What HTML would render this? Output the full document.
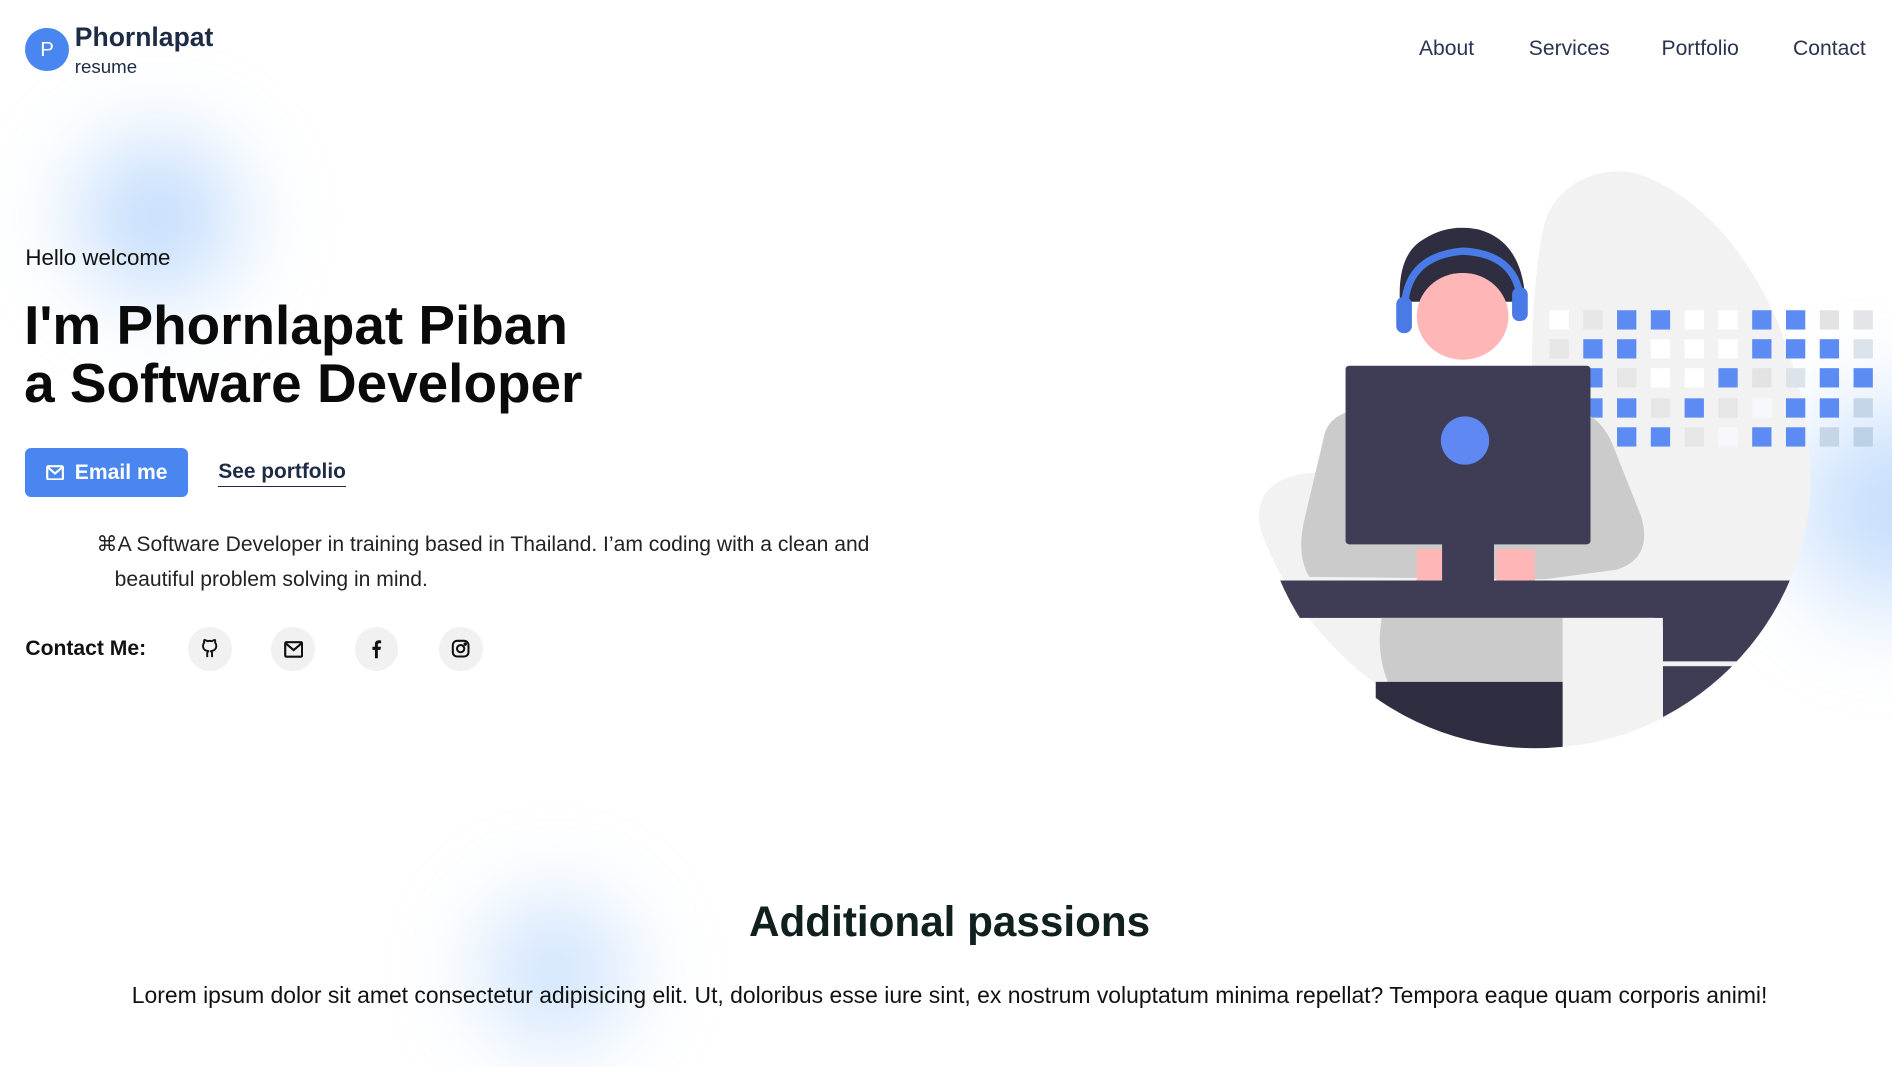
<!DOCTYPE html>
<html><head><meta charset="utf-8">
<style>
html,body{margin:0;padding:0;background:#fff;overflow:hidden}
body{width:1892px;height:1067px}
#pg{zoom:1.2066;position:relative;width:1568px;height:884px;overflow:hidden;font-family:"Liberation Sans",sans-serif;color:#111}
.blob{position:absolute;border-radius:50%;filter:blur(30px)}
.abs{position:absolute;white-space:nowrap}
.nav a{position:absolute;top:31px;font-size:17.5px;color:#2b3350;text-decoration:none}
.ic{position:absolute;top:520px;width:36px;height:36px;border-radius:50%;background:#f1f1f1;display:flex;align-items:center;justify-content:center}
</style></head><body><div id="pg">
<div class="blob" style="left:20px;top:90px;width:220px;height:180px;background:radial-gradient(circle,rgba(150,195,250,.75),rgba(190,220,255,0) 70%)"></div>
<div class="blob" style="left:1440px;top:290px;width:260px;height:260px;background:radial-gradient(circle,rgba(150,195,250,.7),rgba(190,220,255,0) 70%)"></div>
<div class="blob" style="left:360px;top:720px;width:200px;height:170px;background:radial-gradient(circle,rgba(150,195,250,.6),rgba(190,220,255,0) 70%)"></div>

<div class="abs" style="left:21px;top:23px;width:36px;height:36px;border-radius:50%;background:#4a86f0;color:#fff;font-size:17px;text-align:center;line-height:36px">P</div>
<div class="abs" style="left:62px;top:18px;font-size:22px;font-weight:bold;color:#1d2b45">Phornlapat</div>
<div class="abs" style="left:62px;top:46px;font-size:15.5px;color:#1d2b45">resume</div>
<div class="nav"><a style="left:1176px">About</a><a style="left:1267px">Services</a><a style="left:1377px">Portfolio</a><a style="left:1486px">Contact</a></div>

<div class="abs" style="left:21px;top:203px;font-size:18.5px;color:#111">Hello welcome</div>
<div class="abs" style="left:20px;top:246px;font-size:45.5px;font-weight:bold;line-height:48px;color:#0a0a0a">I'm Phornlapat Piban<br>a Software Developer</div>
<div class="abs" style="left:21px;top:371px;width:135px;height:41px;border-radius:5px;background:#4a86f0;color:#fff;font-size:17.5px;line-height:41px">
<svg style="position:absolute;left:17px;top:14px" width="15" height="13" viewBox="0 0 15 13"><rect x="1" y="1" width="13" height="11" rx="1" fill="none" stroke="#fff" stroke-width="1.8"/><path d="M1.5 2 L7.5 7 L13.5 2" fill="none" stroke="#fff" stroke-width="1.8"/></svg>
<span style="position:absolute;left:41px;font-weight:bold">Email me</span></div>
<div class="abs" style="left:181px;top:381px;font-size:17.3px;font-weight:bold;color:#1d2b45;border-bottom:1px solid #1d2b45;padding-bottom:2px">See portfolio</div>
<div class="abs" style="left:80px;top:438px;font-size:17.5px;color:#222;line-height:29px">⌘A Software Developer in training based in Thailand. I’am coding with a clean and<br><span style="padding-left:15px">beautiful problem solving in mind.</span></div>
<div class="abs" style="left:21px;top:528px;font-size:17.5px;font-weight:bold;color:#111">Contact Me:</div>
<div class="ic" style="left:156px"><svg width="16" height="16" viewBox="0 0 16 16" fill="none" stroke="#111" stroke-width="1.6" stroke-linejoin="round"><path d="M6 15v-3c0-1 .3-1.5 1-2-2.5-.3-4.5-1.2-4.5-4.5 0-1 .3-1.7 1-2.4-.2-.6-.2-1.5.1-2.3 1 0 1.8.5 2.5 1a7 7 0 0 1 3.8 0c.7-.5 1.5-1 2.5-1 .3.8.3 1.7.1 2.3.7.7 1 1.4 1 2.4 0 3.3-2 4.2-4.5 4.5.7.5 1 1.2 1 2v3"/></svg></div>
<div class="ic" style="left:225px"><svg width="16" height="14" viewBox="0 0 16 14"><rect x="1" y="1" width="14" height="12" rx="1" fill="none" stroke="#111" stroke-width="1.8"/><path d="M1.5 2 L8 7.5 L14.5 2" fill="none" stroke="#111" stroke-width="1.8"/></svg></div>
<div class="ic" style="left:294px"><svg width="10" height="16" viewBox="0 0 10 16"><path d="M6.5 16V9h2.2l.4-2.6H6.5V4.8c0-.8.3-1.3 1.4-1.3h1.3V1.2C8.9 1.1 8.1 1 7.3 1 5.4 1 4.1 2.2 4.1 4.3v2.1H2V9h2.1v7z" fill="#111"/></svg></div>
<div class="ic" style="left:364px"><svg width="16" height="16" viewBox="0 0 16 16" fill="none" stroke="#111" stroke-width="1.7"><rect x="1.5" y="1.5" width="13" height="13" rx="3.5"/><circle cx="8" cy="8" r="3"/><circle cx="11.8" cy="4.2" r=".6" fill="#111"/></svg></div>

<svg class="abs" style="left:1030px;top:130px" width="540" height="500" viewBox="1030 130 540 500">
<defs><clipPath id="c"><circle cx="1272" cy="390" r="230"/></clipPath></defs>
<path d="M1280 185 C1290 150 1330 135 1360 145 C1430 170 1490 260 1500 380 C1508 500 1420 600 1310 617 C1190 630 1080 540 1045 440 C1035 400 1070 390 1100 392 L1270 330 C1268 280 1272 215 1280 185 Z" fill="#f2f2f2"/>
<g>
<rect x="1284" y="257" width="16" height="16" fill="#fff"/><rect x="1312" y="257" width="16" height="16" fill="#e6e6e6"/><rect x="1340" y="257" width="16" height="16" fill="#5d8bf4"/><rect x="1368" y="257" width="16" height="16" fill="#5d8bf4"/><rect x="1396" y="257" width="16" height="16" fill="#fff"/><rect x="1424" y="257" width="16" height="16" fill="#fff"/><rect x="1452" y="257" width="16" height="16" fill="#5d8bf4"/><rect x="1480" y="257" width="16" height="16" fill="#5d8bf4"/><rect x="1508" y="257" width="16" height="16" fill="#e3e3e3"/><rect x="1536" y="257" width="16" height="16" fill="#e3e5e8"/>
<rect x="1284" y="281" width="16" height="16" fill="#e6e6e6"/><rect x="1312" y="281" width="16" height="16" fill="#5d8bf4"/><rect x="1340" y="281" width="16" height="16" fill="#5d8bf4"/><rect x="1368" y="281" width="16" height="16" fill="#fff"/><rect x="1396" y="281" width="16" height="16" fill="#fff"/><rect x="1424" y="281" width="16" height="16" fill="#fff"/><rect x="1452" y="281" width="16" height="16" fill="#5d8bf4"/><rect x="1480" y="281" width="16" height="16" fill="#5d8bf4"/><rect x="1508" y="281" width="16" height="16" fill="#5d8bf4"/><rect x="1536" y="281" width="16" height="16" fill="#dde3ea"/>
<rect x="1312" y="305" width="16" height="16" fill="#5d8bf4"/><rect x="1340" y="305" width="16" height="16" fill="#e6e6e6"/><rect x="1368" y="305" width="16" height="16" fill="#fff"/><rect x="1396" y="305" width="16" height="16" fill="#fff"/><rect x="1424" y="305" width="16" height="16" fill="#5d8bf4"/><rect x="1452" y="305" width="16" height="16" fill="#e3e3e3"/><rect x="1480" y="305" width="16" height="16" fill="#dde3ea"/><rect x="1508" y="305" width="16" height="16" fill="#5d8bf4"/><rect x="1536" y="305" width="16" height="16" fill="#5d8bf4"/>
<rect x="1312" y="330" width="16" height="16" fill="#5d8bf4"/><rect x="1340" y="330" width="16" height="16" fill="#5d8bf4"/><rect x="1368" y="330" width="16" height="16" fill="#e6e6e6"/><rect x="1396" y="330" width="16" height="16" fill="#5d8bf4"/><rect x="1424" y="330" width="16" height="16" fill="#e6e6e6"/><rect x="1452" y="330" width="16" height="16" fill="#f6f8fb"/><rect x="1480" y="330" width="16" height="16" fill="#5d8bf4"/><rect x="1508" y="330" width="16" height="16" fill="#5d8bf4"/><rect x="1536" y="330" width="16" height="16" fill="#c6d6e8"/>
<rect x="1312" y="354" width="16" height="16" fill="#5d8bf4"/><rect x="1340" y="354" width="16" height="16" fill="#5d8bf4"/><rect x="1368" y="354" width="16" height="16" fill="#5d8bf4"/><rect x="1396" y="354" width="16" height="16" fill="#e6e6e6"/><rect x="1424" y="354" width="16" height="16" fill="#f6f8fb"/><rect x="1452" y="354" width="16" height="16" fill="#5d8bf4"/><rect x="1480" y="354" width="16" height="16" fill="#5d8bf4"/><rect x="1508" y="354" width="16" height="16" fill="#c6d6e8"/><rect x="1536" y="354" width="16" height="16" fill="#bcd0e6"/>
</g>
<path d="M1085 478 Q1074 460 1081 430 L1098 358 Q1105 340 1130 340 L1300 340 Q1325 340 1337 370 L1360 428 Q1370 462 1340 472 L1280 480 Z" fill="#cbcbcb"/>
<rect x="1174" y="455" width="22" height="28" fill="#ffb6b6"/><rect x="1240" y="455" width="32" height="28" fill="#ffb6b6"/>
<path d="M1160 250 Q1158 210 1180 198 Q1200 185 1225 190 Q1262 200 1264 250 Z" fill="#2f2e41"/>
<ellipse cx="1212" cy="262" rx="38" ry="36" fill="#ffb6b6"/>
<path d="M1174 240 Q1180 228 1210 226 Q1240 226 1250 238 L1252 222 Q1230 212 1210 212 Q1185 214 1172 226 Z" fill="#2f2e41"/>
<path d="M1164 252 Q1167 212 1212 208 Q1256 210 1260 248" fill="none" stroke="#4a7ae6" stroke-width="6"/>
<rect x="1157" y="246" width="13" height="30" rx="6" fill="#4a7ae6"/><rect x="1253" y="238" width="13" height="28" rx="6" fill="#4a7ae6"/>
<rect x="1115" y="303" width="203" height="148" rx="3" fill="#3f3d56"/>
<circle cx="1214" cy="365" r="20" fill="#6088f3"/>
<rect x="1195" y="450" width="43" height="32" fill="#3f3d56"/>
<g clip-path="url(#c)">
<rect x="1000" y="481" width="500" height="31" fill="#3f3d56"/>
<rect x="1378" y="510" width="120" height="38" fill="#3f3d56"/>
<rect x="1378" y="552" width="120" height="80" fill="#3f3d56"/>
<path d="M1145 512 L1295 512 L1295 565 L1150 565 Q1140 540 1145 512Z" fill="#cbcbcb"/>
<rect x="1140" y="565" width="155" height="70" fill="#2f2e41"/>
<path d="M1295 512 L1370 512 Q1378 512 1378 520 L1378 640 L1295 640 Z" fill="#f2f2f2"/>
</g>
</svg>

<div class="abs" style="left:0;width:1574px;text-align:center;top:744px;font-size:35px;font-weight:bold;color:#10201f">Additional passions</div>
<div class="abs" style="left:0;width:1574px;text-align:center;top:814px;font-size:19px;color:#111">Lorem ipsum dolor sit amet consectetur adipisicing elit. Ut, doloribus esse iure sint, ex nostrum voluptatum minima repellat? Tempora eaque quam corporis animi!</div>
</div></body></html>
